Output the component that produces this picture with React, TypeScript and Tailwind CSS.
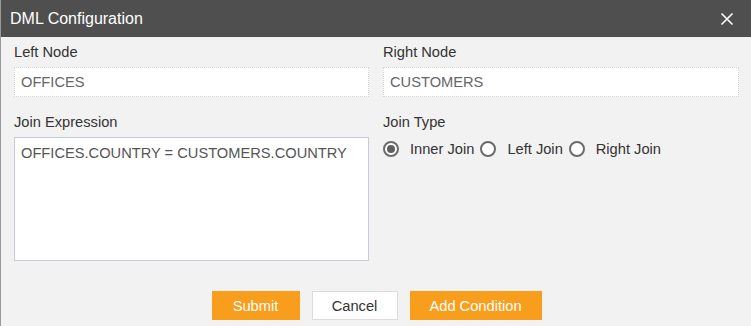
import React from "react";

function Radio({ checked, label }: { checked?: boolean; label: string }) {
  return (
    <label className="flex items-center">
      <span className="w-[16px] h-[16px] rounded-full border-2 border-[#6b6b6b] bg-white flex items-center justify-center">
        {checked && <span className="w-[8px] h-[8px] rounded-full bg-[#5f5f5f]" />}
      </span>
      <span className="ml-[11px] mr-[6px] text-[14.67px] text-[#333]">{label}</span>
    </label>
  );
}

export default function App() {
  return (
    <div
      className="w-[751px] h-[326px] bg-[#f2f2f2] border-l border-[#9a9a9a] flex flex-col overflow-hidden"
      style={{ fontFamily: '"Liberation Sans", Arial, sans-serif' }}
    >
      <div className="h-[37px] bg-[#4f4f4f] flex items-center justify-between pl-[9px] pr-[17px] shrink-0">
        <span className="text-white text-[16px]">DML Configuration</span>
        <svg width="14" height="14" viewBox="0 0 14 14">
          <path d="M1.5 1.5 L12.5 12.5 M12.5 1.5 L1.5 12.5" stroke="#fff" strokeWidth="1.6" />
        </svg>
      </div>
      <div className="flex gap-[14px] pl-[13px] pr-[12px] pt-[7px]">
        <div className="w-[355px] flex flex-col">
          <div className="text-[14.67px] leading-[16px] text-[#333]">Left Node</div>
          <div className="mt-[7px] h-[30px] bg-white border border-dotted border-[#d4d4d4] flex items-center px-[6px] text-[14.67px] text-[#666]">
            OFFICES
          </div>
          <div className="mt-[17px] text-[14.67px] leading-[16px] text-[#333]">Join Expression</div>
          <div className="mt-[7px] h-[124px] bg-white border border-[#c5cbd8] px-[6px] pt-[6px] text-[14.67px] leading-[18px] text-[#555]">
            OFFICES.COUNTRY = CUSTOMERS.COUNTRY
          </div>
        </div>
        <div className="w-[356px] flex flex-col">
          <div className="text-[14.67px] leading-[16px] text-[#333]">Right Node</div>
          <div className="mt-[7px] h-[30px] bg-white border border-dotted border-[#d4d4d4] flex items-center px-[6px] text-[14.67px] text-[#666]">
            CUSTOMERS
          </div>
          <div className="mt-[17px] text-[14.67px] leading-[16px] text-[#333]">Join Type</div>
          <div className="mt-[10px] flex items-center h-[18px]">
            <Radio checked label="Inner Join" />
            <Radio label="Left Join" />
            <Radio label="Right Join" />
          </div>
        </div>
      </div>
      <div className="flex justify-center gap-[12px] mt-[30px] pl-[1px]">
        <button className="w-[88px] h-[29px] pt-[1px] bg-[#f89d1c] text-white text-[14.67px]">Submit</button>
        <button className="w-[86px] h-[29px] pt-[1px] bg-white border border-[#dcdcdc] text-[#333] text-[14.67px]">Cancel</button>
        <button className="w-[132px] h-[29px] pt-[1px] bg-[#f89d1c] text-white text-[14.67px]">Add Condition</button>
      </div>
    </div>
  );
}
